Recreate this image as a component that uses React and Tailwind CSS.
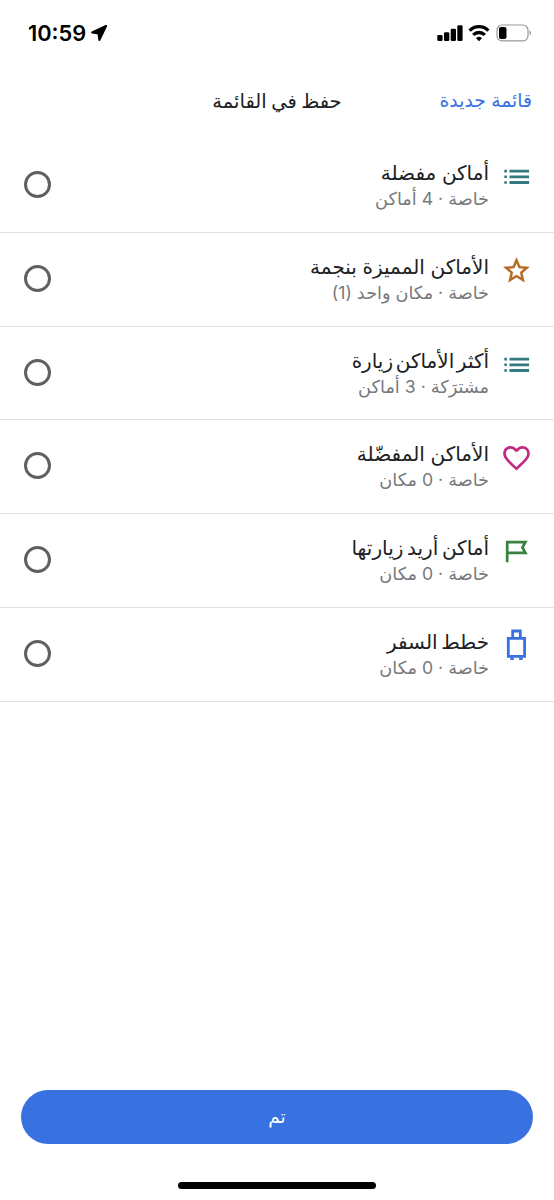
import React from 'react';

const ListIcon = () => (
  <svg viewBox="0 0 28 28" className="w-7 h-7" fill="#34797d">
    <path d="M7.5 6.7h19.6v2.8H7.5zM7.5 12.4h19.6v2.8H7.5zM7.5 18.1h19.6v2.8H7.5zM2.3 6.8h2.6v2.6H2.3zM2.3 12.5h2.6v2.6H2.3zM2.3 18.2h2.6v2.6H2.3z" />
  </svg>
);

const StarIcon = () => (
  <svg viewBox="0 0 24 24" className="w-[31px] h-[31px] shrink-0" fill="#b3691f" stroke="#b3691f" strokeWidth="0.3">
    <path d="M22 9.24l-7.19-.62L12 2 9.19 8.63 2 9.24l5.46 4.73L5.82 21 12 17.27 18.18 21l-1.63-7.03L22 9.24zM12 15.4l-3.76 2.27 1-4.28-3.32-2.88 4.38-.38L12 6.1l1.71 4.04 4.38.38-3.32 2.88 1 4.28L12 15.4z" />
  </svg>
);

const HeartIcon = () => (
  <svg viewBox="0 0 24 24" className="w-[33px] h-8 shrink-0" fill="#c22b83">
    <path d="M16.5 3c-1.74 0-3.41.81-4.5 2.09C10.91 3.81 9.24 3 7.5 3 4.42 3 2 5.42 2 8.5c0 3.78 3.4 6.86 8.55 11.54L12 21.35l1.45-1.32C18.6 15.36 22 12.28 22 8.5 22 5.42 19.58 3 16.5 3zm-4.4 15.55l-.1.1-.1-.1C7.14 14.24 4 11.39 4 8.5 4 6.5 5.5 5 7.5 5c1.54 0 3.04.99 3.57 2.36h1.87C13.46 5.99 14.96 5 16.5 5c2 0 3.5 1.5 3.5 3.5 0 2.89-3.14 5.74-7.9 10.05z" />
  </svg>
);

const FlagIcon = () => (
  <svg viewBox="0 0 28 28" className="w-7 h-7" fill="none" stroke="#38813f" strokeWidth="2.7">
    <path d="M5.2 24.3V4.2h18.2l-3 5.3 3 5.4H5.2" />
  </svg>
);

const LuggageIcon = () => (
  <svg viewBox="0 0 24 34" className="w-6 h-[34px]" fill="none" stroke="#3871e0" strokeWidth="2.8">
    <path d="M4.3 9.3h16.3v18H4.3zM8.7 9V2h7.6v7" />
    <path d="M6.3 28.4h3.5v2.6H6.3zM15.1 28.4h3.5v2.6h-3.5z" fill="#3871e0" stroke="none" />
  </svg>
);

const lists = [
  { title: 'أماكن مفضلة', detail: 'خاصة · 4 أماكن', icon: ListIcon, spacing: '' },
  { title: 'الأماكن المميزة بنجمة', detail: 'خاصة · مكان واحد (1)', icon: StarIcon, spacing: '' },
  { title: 'أكثر الأماكن زيارة', detail: 'مشترَكة · 3 أماكن', icon: ListIcon, spacing: '[word-spacing:-3px]' },
  { title: 'الأماكن المفضّلة', detail: 'خاصة · 0 مكان', icon: HeartIcon, spacing: '' },
  { title: 'أماكن أريد زيارتها', detail: 'خاصة · 0 مكان', icon: FlagIcon, spacing: '[word-spacing:-2px]' },
  { title: 'خطط السفر', detail: 'خاصة · 0 مكان', icon: LuggageIcon, spacing: '[word-spacing:-2px]' },
];

const StatusBar = () => (
  <div dir="ltr" className="flex h-[66px] items-center justify-between pl-[28px] pr-[22px]">
    <div className="flex items-center gap-1 pt-px">
      <span className="font-['Inter'] text-[21.8px] font-semibold leading-none">10:59</span>
      <svg viewBox="0 0 18 18" className="w-[18px] h-[18px]">
        <path d="M16 2L2.2 8.4l6.3.9.9 6.5z" fill="#000" stroke="#000" strokeWidth="2.2" strokeLinejoin="round" />
      </svg>
    </div>
    <div className="flex items-center">
      <svg viewBox="0 0 26 18" className="w-[26px] h-[18px]">
        <rect x="0.3" y="11" width="5.3" height="6" rx="1.3" />
        <rect x="7" y="8.2" width="5.3" height="8.8" rx="1.3" />
        <rect x="13.7" y="4.8" width="5.3" height="12.2" rx="1.3" />
        <rect x="20.3" y="1.3" width="5.3" height="15.7" rx="1.3" />
      </svg>
      <svg viewBox="0 0 22 18" className="ml-[5px] w-[22px] h-[18px]" fill="none" stroke="#000" strokeWidth="3.3">
        <path d="M1.6 6.6a13.3 13.3 0 0 1 18.8 0M5.2 10.9a8.2 8.2 0 0 1 11.6 0" />
        <path d="M11 17.2l-3-3a4.3 4.3 0 0 1 6 0z" fill="#000" stroke="none" />
      </svg>
      <svg viewBox="0 0 36 18" className="ml-[6px] w-[36px] h-[18px]">
        <rect x="1" y="1" width="31" height="15.8" rx="5" fill="none" stroke="#989898" strokeWidth="1.2" />
        <rect x="3" y="3" width="7.5" height="12" rx="2" />
        <path d="M33.5 6.3q3.2 2.6 0 5.2z" fill="#989898" />
      </svg>
    </div>
  </div>
);

const ListRow = ({ title, detail, icon: Icon, spacing }) => (
  <button className="flex h-[93.8px] w-full items-start border-b border-[#dfe0e2] pr-[21px] pl-[24px] text-right">
    <span className="mt-[20px] flex h-[36px] w-[34px] shrink-0 items-center justify-center">
      <Icon />
    </span>
    <span className="mr-[10px] flex grow flex-col pt-[21px]">
      <span className={`h-[26px] whitespace-nowrap text-[20px] leading-[26px] text-[#202124] ${spacing}`}>{title}</span>
      <span className="h-[24px] whitespace-nowrap text-[17.7px] leading-[25px] text-[#77797d]">{detail}</span>
    </span>
    <span className="mt-[32px] size-[27px] shrink-0 rounded-full border-[3px] border-[#5f6064]" />
  </button>
);

const App = () => {
  return (
    <div dir="rtl" className="flex h-[1200px] w-[554px] flex-col overflow-hidden bg-white font-['Inter','DejaVu_Sans',sans-serif]">
      <StatusBar />

      {/* Header */}
      <header className="grid h-[73px] grid-cols-3 items-center px-[22px] pb-[2px]">
        <button className="whitespace-nowrap text-right text-[18.8px] text-[#3871e0]">قائمة جديدة</button>
        <h1 className="whitespace-nowrap text-center text-[19.5px] text-[#202124] [word-spacing:-1px]">حفظ في القائمة</h1>
      </header>

      <main className="grow">
        {lists.map((list) => (
          <ListRow key={list.title} {...list} />
        ))}
      </main>

      {/* Bottom action */}
      <footer className="flex h-[110px] flex-col items-center px-[21px]">
        <button className="h-[54px] w-full shrink-0 rounded-full bg-[#3871e0] text-[18.5px] text-white">تم</button>
        <div className="mt-[38px] h-[7px] w-[198px] shrink-0 rounded-full bg-black" />
      </footer>
    </div>
  );
};

export default App;
